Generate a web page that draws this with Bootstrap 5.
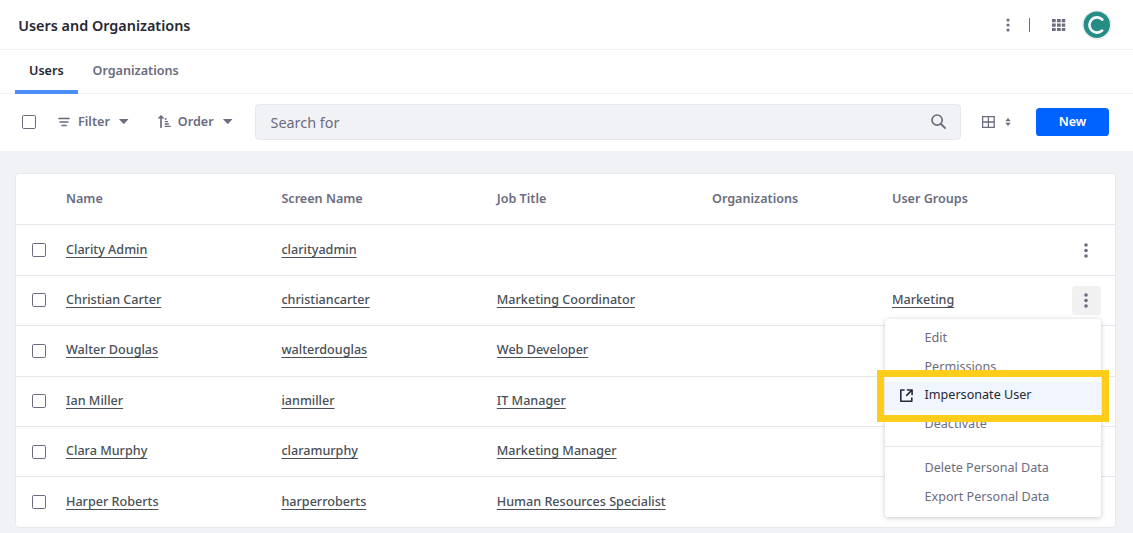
<!DOCTYPE html>
<html lang="en">
<head>
<meta charset="utf-8">
<meta name="viewport" content="width=device-width, initial-scale=1">
<title>Users and Organizations</title>
<link href="https://cdn.jsdelivr.net/npm/bootstrap@5.3.0/dist/css/bootstrap.min.css" rel="stylesheet">
<style>
  body { font-family: "Noto Sans", sans-serif; font-size: 12.6px; line-height: 18.9px; background: #f1f2f5; color: #6b6c7e; height: 533px; overflow: hidden; }
  svg { display: block; fill: currentColor; flex: none; }
  .topbar { height: 50px; border-bottom: 1px solid #f1f2f5; padding: 0 21px 0 18.2px; }
  .topbar h1 { font-size: 14.4px; font-weight: 600; color: #272833; line-height: 20px; margin-top: 2px; }
  .sep { width: 1px; height: 14px; background: #6b6c7e; margin: 0 22px 0 19px; }
  .avatar { width: 30px; height: 30px; margin-left: 16px; }
  .tabs { height: 44px; border-bottom: 1px solid #f1f2f5; padding-left: 15px; font-weight: 600; }
  .tabs .nav-link { padding: 12px 14px 0; color: #6b6c7e; height: 44px; }
  .tabs .nav-link + .nav-link { padding-left: 14.8px; }
  .tabs .nav-link.active { color: #272833; border-bottom: 4px solid #4b8df8; }
  .toolbar { height: 57px; padding: 0 24px 2px 22px; font-weight: 600; }
  .tool-label { padding-top: 2px; }
  .form-check-input[type=checkbox] { width: 14px; height: 14px; margin: 0; border: 1px solid #6b6c7e; border-radius: 1.8px; display: block; float: none; }
  .search { flex: none; width: 706px; height: 36px; background: #f1f2f5; border: 1px solid #e7e7ed; border-radius: 3.6px; padding: 0 14.5px 0 14.5px; font-size: 14.4px; font-weight: 400; margin-left: auto; }
  .search span { padding-top: 3px; }
  .btn-new { width: 73px; height: 28px; background: #0063ff; color: #fff; font-size: 12.6px; font-weight: 600; line-height: 18px; padding: 0; border: 0; border-radius: 3.6px; margin-left: 25px; flex: none; }
  .users { margin: 22px 17px 0 15px; border: 1px solid #e7e7ed; border-radius: 3.6px; }
  .users table { table-layout: fixed; --bs-table-bg: transparent; border-collapse: separate; border-spacing: 0; margin: 0; color: inherit; }
  .users th, .users td { height: 50.4px; padding: 0; vertical-align: middle; border-bottom: 1px solid #e7e7ed; }
  .users th { font-weight: 600; color: #6b6c7e; height: 51.4px; }
  .users tbody tr:last-child td { border-bottom: 0; height: 49.6px; }
  .users td a { color: #495057; font-weight: 500; text-decoration: underline; text-decoration-thickness: 1px; text-underline-offset: 3px; text-decoration-skip-ink: none; }
  .users td:first-child { padding-left: 16px; }
  .kebab { width: 29px; height: 29px; border-radius: 3.6px; margin-left: auto; margin-right: 14px; color: #6b6c7e; padding-right: 1px; }
  .kebab.open { background: #f1f1f2; }
  .actions { display: block; left: auto; right: 32px; top: 319px; width: 216px; height: 198px; padding: 5px 0; border: 0; border-radius: 3.6px; font-size: 12.6px; box-shadow: 0 1px 5px rgba(39,40,51,.25); min-width: 0; }
  .actions .dropdown-item { height: 28.8px; padding: 4px 0 0 39.5px; line-height: 19px; color: #6b6c7e; }
  .actions .dropdown-item.current { background: #f0f5ff; color: #272833; position: relative; height: 28px; margin-bottom: .8px; padding-top: 3px; }
  .actions .dropdown-item svg { position: absolute; left: 15px; top: 7.6px; }
  .actions .dropdown-divider { margin: 7px 0 6.6px; border-color: #e7e7ed; opacity: 1; }
  .callout { position: absolute; left: 876.6px; top: 369.6px; width: 232px; height: 52px; border: 7px solid #ffcd1a; z-index: 1100; }
</style>
</head>
<body>
<header class="topbar bg-white d-flex align-items-center">
  <h1 class="mb-0 me-auto">Users and Organizations</h1>
  <svg width="4" height="14" viewBox="0 0 4 14"><circle cx="2" cy="2" r="1.6"/><circle cx="2" cy="7" r="1.6"/><circle cx="2" cy="12" r="1.6"/></svg>
  <span class="sep"></span>
  <svg width="14" height="12" viewBox="0 0 14 12"><path d="M0 0h3.7v3.2H0zM5 0h3.7v3.2H5zM9.8 0h3.4v3.2H9.8zM0 4.4h3.7v3.3H0zM5 4.4h3.7v3.3H5zM9.8 4.4h3.4v3.3H9.8zM0 9h3.7v3H0zM5 9h3.7v3H5zM9.8 9h3.4v3H9.8z"/></svg>
  <svg class="avatar" viewBox="0 0 30 30"><circle cx="14.8" cy="15" r="14.4" fill="#fff" stroke="#e7e7ed"/><circle cx="14.8" cy="14.7" r="13.2" fill="#248d86"/><circle cx="15" cy="15" r="7.6" fill="none" stroke="#fff" stroke-width="2.6" stroke-linecap="round" stroke-dasharray="35.2 100" transform="rotate(47 15 15)"/></svg>
</header>
<nav class="tabs nav bg-white flex-nowrap">
  <a class="nav-link active" href="#">Users</a>
  <a class="nav-link" href="#">Organizations</a>
</nav>
<div class="toolbar bg-white d-flex align-items-center">
  <input class="form-check-input" type="checkbox" aria-label="Select all">
  <svg style="margin-left:22px" width="12" height="10" viewBox="0 0 12 10"><path d="M.8 1.5h10.4M2 5h8M4 8.5h4.2" fill="none" stroke="currentColor" stroke-width="1.4" stroke-linecap="round"/></svg>
  <span class="tool-label" style="margin-left:8px">Filter</span>
  <svg style="margin-left:9px" width="10" height="5" viewBox="0 0 10 5"><path d="M.6 0h8.3q.7 0 .2.6L5.4 4.5q-.6.6-1.2 0L.3.6Q-.1 0 .6 0z"/></svg>
  <svg style="margin-left:29px" width="13" height="13" viewBox="0 0 13 13"><path d="M3 12.2V1.2M1 3L3 1 5 3" fill="none" stroke="currentColor" stroke-width="1.7" stroke-linecap="round" stroke-linejoin="round"/><path d="M7.2 4h1M7.2 6.6h2.4M7.2 9h3.2M7.2 11.4h5" fill="none" stroke="currentColor" stroke-width="1.3" stroke-linecap="round"/></svg>
  <span class="tool-label" style="margin-left:7px">Order</span>
  <svg style="margin-left:9px" width="10" height="5" viewBox="0 0 10 5"><path d="M.6 0h8.3q.7 0 .2.6L5.4 4.5q-.6.6-1.2 0L.3.6Q-.1 0 .6 0z"/></svg>
  <div class="search d-flex align-items-center justify-content-between">
    <span>Search for</span>
    <svg width="15" height="15" viewBox="0 0 15 15"><path d="M10 10l4 4" stroke="currentColor" stroke-width="1.8" stroke-linecap="round"/><circle cx="6.1" cy="6.1" r="5.1" fill="none" stroke="currentColor" stroke-width="1.7"/></svg>
  </div>
  <svg style="margin-left:21px" width="13" height="12" viewBox="0 0 13 12"><path d="M.6.6h11.6v10.8H.6zM6.4.6v10.8M.6 6h11.6" fill="none" stroke="currentColor" stroke-width="1.3"/></svg>
  <svg style="margin-left:10px" width="6" height="8" viewBox="0 0 6 8"><path d="M3 0l2.7 3.2H.3zM3 8l2.7-3.2H.3z"/></svg>
  <button class="btn btn-new" type="button">New</button>
</div>
<main class="users bg-white">
  <table class="table">
    <colgroup><col style="width:50px"><col style="width:215.4px"><col style="width:215.4px"><col style="width:215.2px"><col style="width:180px"><col></colgroup>
    <thead><tr><th></th><th>Name</th><th>Screen Name</th><th>Job Title</th><th>Organizations</th><th>User Groups</th></tr></thead>
    <tbody>
      <tr><td><input class="form-check-input" type="checkbox"></td><td><a href="#">Clarity Admin</a></td><td><a href="#">clarityadmin</a></td><td></td><td></td><td><div class="d-flex align-items-center"><span class="kebab d-flex align-items-center justify-content-center"><svg width="4" height="15" viewBox="0 0 4 15"><circle cx="2" cy="2" r="1.8"/><circle cx="2" cy="7.5" r="1.8"/><circle cx="2" cy="13" r="1.8"/></svg></span></div></td></tr>
      <tr><td><input class="form-check-input" type="checkbox"></td><td><a href="#">Christian Carter</a></td><td><a href="#">christiancarter</a></td><td><a href="#">Marketing Coordinator</a></td><td></td><td><div class="d-flex align-items-center"><a href="#">Marketing</a><span class="kebab open d-flex align-items-center justify-content-center"><svg width="4" height="15" viewBox="0 0 4 15"><circle cx="2" cy="2" r="1.8"/><circle cx="2" cy="7.5" r="1.8"/><circle cx="2" cy="13" r="1.8"/></svg></span></div></td></tr>
      <tr><td><input class="form-check-input" type="checkbox"></td><td><a href="#">Walter Douglas</a></td><td><a href="#">walterdouglas</a></td><td><a href="#">Web Developer</a></td><td></td><td></td></tr>
      <tr><td><input class="form-check-input" type="checkbox"></td><td><a href="#">Ian Miller</a></td><td><a href="#">ianmiller</a></td><td><a href="#">IT Manager</a></td><td></td><td></td></tr>
      <tr><td><input class="form-check-input" type="checkbox"></td><td><a href="#">Clara Murphy</a></td><td><a href="#">claramurphy</a></td><td><a href="#">Marketing Manager</a></td><td></td><td></td></tr>
      <tr><td><input class="form-check-input" type="checkbox"></td><td><a href="#">Harper Roberts</a></td><td><a href="#">harperroberts</a></td><td><a href="#">Human Resources Specialist</a></td><td></td><td></td></tr>
    </tbody>
  </table>
</main>
<div class="dropdown-menu actions">
  <a class="dropdown-item" href="#">Edit</a>
  <a class="dropdown-item" href="#">Permissions</a>
  <a class="dropdown-item current" href="#"><svg width="13" height="13" viewBox="0 0 13 13"><path d="M4 1H.8v11.2h11V9M7.4 1h4.7v4.6M11.8 1.2L6.7 6.4" fill="none" stroke="currentColor" stroke-width="1.6" stroke-linejoin="round" stroke-linecap="round"/></svg>Impersonate User</a>
  <a class="dropdown-item" href="#">Deactivate</a>
  <hr class="dropdown-divider">
  <a class="dropdown-item" href="#">Delete Personal Data</a>
  <a class="dropdown-item" href="#">Export Personal Data</a>
</div>
<div class="callout"></div>
<script src="https://cdn.jsdelivr.net/npm/bootstrap@5.3.0/dist/js/bootstrap.bundle.min.js"></script>
</body>
</html>
